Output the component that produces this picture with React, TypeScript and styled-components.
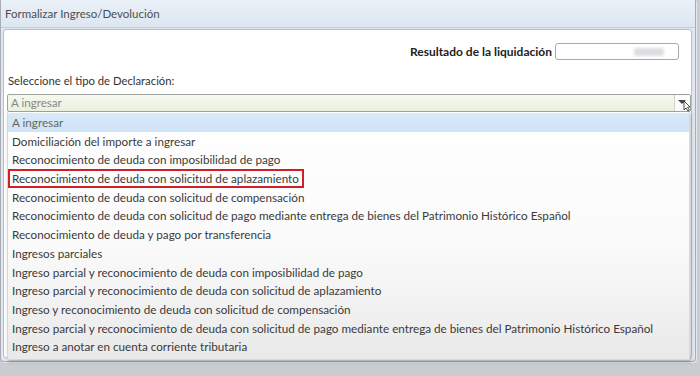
import styled, { createGlobalStyle } from "styled-components";

const GlobalStyle = createGlobalStyle`
  html, body {
    margin: 0;
    padding: 0;
    background: #c9ccd0;
  }
  body {
    font-family: Lato, "Open Sans", sans-serif;
    color: #333;
  }
`;

const options = [
    "A ingresar",
    "Domiciliación del importe a ingresar",
    "Reconocimiento de deuda con imposibilidad de pago",
    "Reconocimiento de deuda con solicitud de aplazamiento",
    "Reconocimiento de deuda con solicitud de compensación",
    "Reconocimiento de deuda con solicitud de pago mediante entrega de bienes del Patrimonio Histórico Español",
    "Reconocimiento de deuda y pago por transferencia",
    "Ingresos parciales",
    "Ingreso parcial y reconocimiento de deuda con imposibilidad de pago",
    "Ingreso parcial y reconocimiento de deuda con solicitud de aplazamiento",
    "Ingreso y reconocimiento de deuda con solicitud de compensación",
    "Ingreso parcial y reconocimiento de deuda con solicitud de pago mediante entrega de bienes del Patrimonio Histórico Español",
    "Ingreso a anotar en cuenta corriente tributaria",
];

export default function App() {
    return (
        <>
            <GlobalStyle />
            <Screen>
                <Dialog>
                    <TitleBar>Formalizar Ingreso/Devolución</TitleBar>
                    <Panel>
                        <ResultRow>
                            <ResultLabel>Resultado de la liquidación</ResultLabel>
                            <ResultInput>
                                <Blur />
                            </ResultInput>
                        </ResultRow>
                        <FieldLabel>Seleccione el tipo de Declaración:</FieldLabel>
                        <SelectWrap>
                            <SelectBox>
                                <SelectValue>A ingresar</SelectValue>
                                <ArrowButton>
                                    <svg width="14" height="16" viewBox="0 0 14 16">
                                        <path d="M2 5 L10 5 L6 9 Z" fill="#444" />
                                        <path
                                            d="M8 6 L8 15 L10 13 L12 16 L13.5 15.2 L11.5 12.3 L14 12 Z"
                                            fill="#fff"
                                            stroke="#222"
                                            strokeWidth="0.8"
                                        />
                                    </svg>
                                </ArrowButton>
                            </SelectBox>
                            <List>
                                {options.map((o, i) => (
                                    <Item key={i} active={i === 0} marked={i === 3}>
                                        {o}
                                    </Item>
                                ))}
                            </List>
                        </SelectWrap>
                    </Panel>
                </Dialog>
            </Screen>
        </>
    );
}

const Screen = styled.div`
    width: 700px;
    height: 376px;
    overflow: hidden;
    padding: 0 4px 0 0;
    box-sizing: border-box;
    background: #c9ccd0;
`;

const Dialog = styled.div`
    height: 362px;
    border: 1px solid #a9adb3;
    border-top: none;
    border-radius: 0 0 4px 4px;
    background: #dfe7f0;
    display: flex;
    flex-direction: column;
    box-sizing: border-box;
    box-shadow: 1px 1px 0 #e4e6e8;
`;

const TitleBar = styled.div`
    height: 27px;
    flex: none;
    display: flex;
    align-items: center;
    padding-left: 4px;
    font-size: 11.5px;
    color: #4a4f55;
    background: linear-gradient(#eaf0f7, #dde6f0);
    border-bottom: 1px solid #c3ccd6;
`;

const Panel = styled.div`
    flex: 1;
    margin: 1px 3px 3px 2px;
    background: #fff;
    border: 1px solid #b9bec4;
    border-radius: 3px;
    padding: 13px 0 0 3px;
`;

const ResultRow = styled.div`
    display: flex;
    justify-content: flex-end;
    align-items: center;
    gap: 3px;
    padding-right: 12px;
`;

const ResultLabel = styled.span`
    font-size: 12px;
    font-weight: bold;
    color: #222;
`;

const ResultInput = styled.div`
    width: 124px;
    height: 17px;
    border: 1px solid #a8a8a8;
    border-radius: 3px;
    background: #fff;
    display: flex;
    justify-content: flex-end;
    align-items: center;
    padding-right: 14px;
    box-sizing: border-box;
`;

const Blur = styled.div`
    width: 30px;
    height: 8px;
    background: #dcdde0;
    border-radius: 3px;
    filter: blur(1.5px);
`;

const FieldLabel = styled.div`
    margin-top: 14px;
    padding-left: 1px;
    font-size: 11.3px;
    color: #333;
`;

const SelectWrap = styled.div`
    position: relative;
    margin-top: 7px;
`;

const SelectBox = styled.div`
    height: 18px;
    display: flex;
    border: 1px solid #9ea39a;
    border-radius: 2px;
    background: linear-gradient(#f6f9ee, #e9f0de);
    box-sizing: border-box;
`;

const SelectValue = styled.div`
    flex: 1;
    font-size: 11.6px;
    color: #888;
    padding-left: 3px;
    line-height: 16px;
`;

const ArrowButton = styled.div`
    width: 15px;
    background: #fbfbfb;
    border-left: 1px solid #d0d3cc;
    display: flex;
    align-items: flex-start;
    justify-content: center;
    svg {
        overflow: visible;
    }
`;

const List = styled.div`
    position: absolute;
    top: 18px;
    left: 0;
    right: 1px;
    background: linear-gradient(#ffffff 0%, #fafafa 55%, #e9e9e9 100%);
    box-shadow: 1px 2px 3px rgba(0, 0, 0, 0.25);
    border: 1px solid #d8d8d8;
    border-top: none;
    padding: 1px 0 3px;
`;

const Item = styled.div<{ active?: boolean; marked?: boolean }>`
    height: 18.7px;
    line-height: 18.7px;
    font-size: 11.7px;
    padding-left: 4px;
    white-space: nowrap;
    color: #3a3a3a;
    background: ${(p) => (p.active ? "linear-gradient(#d8e9f8, #cfe4f7)" : "transparent")};
    ${(p) => (p.active ? "color: #666;" : "")}
    ${(p) =>
        p.marked
            ? `
        width: max-content;
        padding-right: 5px;
        outline: 2px solid #d01f27;
        outline-offset: -2px;
    `
            : ""}
`;
